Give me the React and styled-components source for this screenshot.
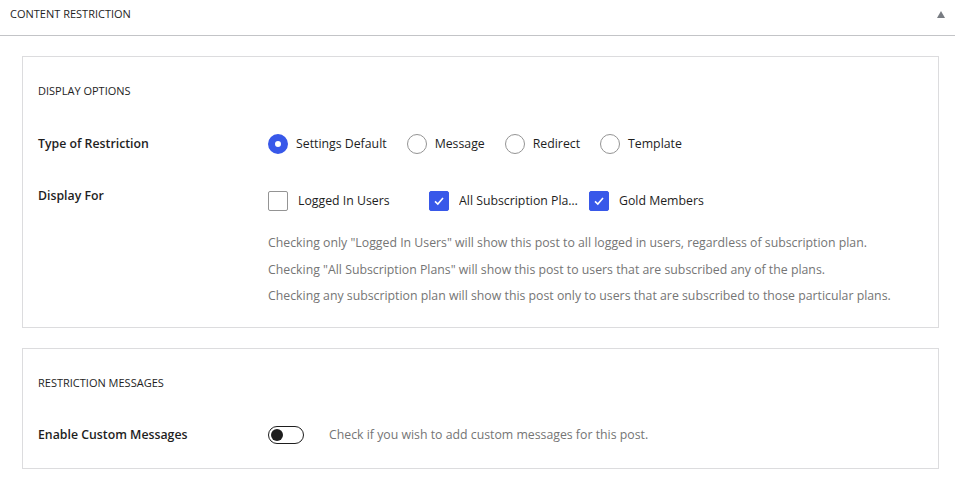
import { useState } from 'react';
import styled, { createGlobalStyle } from 'styled-components';

const GlobalStyle = createGlobalStyle`
  body {
    margin: 0;
    background: #fff;
    font-family: "Open Sans", "Noto Sans", sans-serif;
    color: #1e1e1e;
  }
`;

const restrictionTypes = ['Settings Default', 'Message', 'Redirect', 'Template'];

const helpLines = [
  'Checking only "Logged In Users" will show this post to all logged in users, regardless of subscription plan.',
  'Checking "All Subscription Plans" will show this post to users that are subscribed any of the plans.',
  'Checking any subscription plan will show this post only to users that are subscribed to those particular plans.',
];

const App = () => {
  const [type, setType] = useState('Settings Default');
  const [displayFor, setDisplayFor] = useState({
    'Logged In Users': false,
    'All Subscription Plans': true,
    'Gold Members': true,
  });
  const [customMessages, setCustomMessages] = useState(false);

  const toggleDisplayFor = (key) => {
    setDisplayFor({ ...displayFor, [key]: !displayFor[key] });
  };

  return (
    <>
      <GlobalStyle />
      <Panel>
        <PanelHeader>
          <PanelTitle>Content Restriction</PanelTitle>
          <Caret viewBox="0 0 8 7">
            <path d="M4 0 L8 7 L0 7 Z" fill="#787c82" />
          </Caret>
        </PanelHeader>
        <PanelBody>
          <Box>
            <BoxTitle>Display Options</BoxTitle>
            <Row $gap="35px">
              <Label>Type of Restriction</Label>
              <Controls>
                {restrictionTypes.map((t) => (
                  <RadioItem key={t} onClick={() => setType(t)}>
                    <Radio $checked={type === t} />
                    {t}
                  </RadioItem>
                ))}
              </Controls>
            </Row>
            <Row $top $gap="32px">
              <Label>Display For</Label>
              <Column>
                <CheckList>
                  {Object.keys(displayFor).map((key) => (
                    <CheckItem key={key} onClick={() => toggleDisplayFor(key)}>
                      <Checkbox $checked={displayFor[key]}>
                        {displayFor[key] && (
                          <svg width="14" height="14" viewBox="0 0 14 14">
                            <path
                              d="M3 7.4 L5.8 10 L11 4"
                              fill="none"
                              stroke="#fff"
                              strokeWidth="1.6"
                            />
                          </svg>
                        )}
                      </Checkbox>
                      <CheckText>{key}</CheckText>
                    </CheckItem>
                  ))}
                </CheckList>
                <Help>
                  {helpLines.map((line) => (
                    <HelpLine key={line}>{line}</HelpLine>
                  ))}
                </Help>
              </Column>
            </Row>
          </Box>
          <Box $second>
            <BoxTitle>Restriction Messages</BoxTitle>
            <Row>
              <Label>Enable Custom Messages</Label>
              <Controls>
                <Toggle $on={customMessages} onClick={() => setCustomMessages(!customMessages)} />
                <ToggleHint>Check if you wish to add custom messages for this post.</ToggleHint>
              </Controls>
            </Row>
          </Box>
        </PanelBody>
      </Panel>
    </>
  );
};

const Panel = styled.div`
  width: 955px;
`;

const PanelHeader = styled.div`
  display: flex;
  justify-content: space-between;
  align-items: flex-start;
  height: 36px;
  padding: 6px 10px 0 10px;
  box-sizing: border-box;
  border-bottom: 1px solid #c3c4c7;
`;

const PanelTitle = styled.h2`
  margin: 0;
  font-size: 11px;
  line-height: 16px;
  font-weight: 400;
  text-transform: uppercase;
`;

const Caret = styled.svg`
  width: 8px;
  height: 7px;
  margin-top: 5px;
`;

const PanelBody = styled.div`
  padding: 20px 16px 0 22px;
`;

const Box = styled.section`
  border: 1px solid #dcdcde;
  padding: 0 15px ${(p) => (p.$second ? '23px' : '17px')};
  margin-top: ${(p) => (p.$second ? '20px' : '0')};
`;

const BoxTitle = styled.h3`
  margin: 26px 0 0;
  font-size: 11px;
  line-height: 16px;
  font-weight: 400;
  text-transform: uppercase;
`;

const Row = styled.div`
  display: flex;
  align-items: ${(p) => (p.$top ? 'flex-start' : 'center')};
  margin-top: ${(p) => p.$gap || '34px'};
`;

const Label = styled.div`
  width: 230px;
  flex-shrink: 0;
  font-size: 12.3px;
  line-height: 20px;
  font-weight: 600;
`;

const Controls = styled.div`
  display: flex;
  align-items: center;
  gap: 20px;
  font-size: 12.3px;
  line-height: 20px;
`;

const Column = styled.div`
  display: flex;
  flex-direction: column;
  padding-top: 5px;
`;

const RadioItem = styled.label`
  display: flex;
  align-items: center;
  gap: 8px;
  cursor: pointer;
`;

const Radio = styled.span`
  width: 20px;
  height: 20px;
  box-sizing: border-box;
  border-radius: 50%;
  border: ${(p) => (p.$checked ? '7px solid #3858e9' : '1px solid #949494')};
  background: #fff;
`;

const CheckList = styled.div`
  display: grid;
  grid-template-columns: 161px 160px 160px;
  font-size: 12.3px;
  line-height: 20px;
`;

const CheckItem = styled.label`
  display: flex;
  align-items: center;
  gap: 10px;
  min-width: 0;
  padding-right: 10px;
  cursor: pointer;
`;

const Checkbox = styled.span`
  display: flex;
  align-items: center;
  justify-content: center;
  width: 20px;
  height: 20px;
  flex-shrink: 0;
  box-sizing: border-box;
  border-radius: 2px;
  border: 1px solid ${(p) => (p.$checked ? '#3858e9' : '#949494')};
  background: ${(p) => (p.$checked ? '#3858e9' : '#fff')};
`;

const CheckText = styled.span`
  white-space: nowrap;
  overflow: hidden;
  text-overflow: ellipsis;
  color: #1e1e1e;
`;

const Help = styled.div`
  margin-top: 19px;
  font-size: 12.3px;
  line-height: 26.5px;
  color: #757575;
`;

const HelpLine = styled.p`
  margin: 0;
`;

const Toggle = styled.span`
  position: relative;
  width: 36px;
  height: 18px;
  box-sizing: border-box;
  border: 1px solid #1e1e1e;
  border-radius: 9px;
  background: ${(p) => (p.$on ? '#3858e9' : '#fff')};
  cursor: pointer;

  &::after {
    content: '';
    position: absolute;
    top: 2px;
    left: ${(p) => (p.$on ? '20px' : '2px')};
    width: 12px;
    height: 12px;
    border-radius: 50%;
    background: ${(p) => (p.$on ? '#fff' : '#1e1e1e')};
  }
`;

const ToggleHint = styled.span`
  margin-left: 5px;
  font-size: 12.3px;
  color: #757575;
`;

export default App;
